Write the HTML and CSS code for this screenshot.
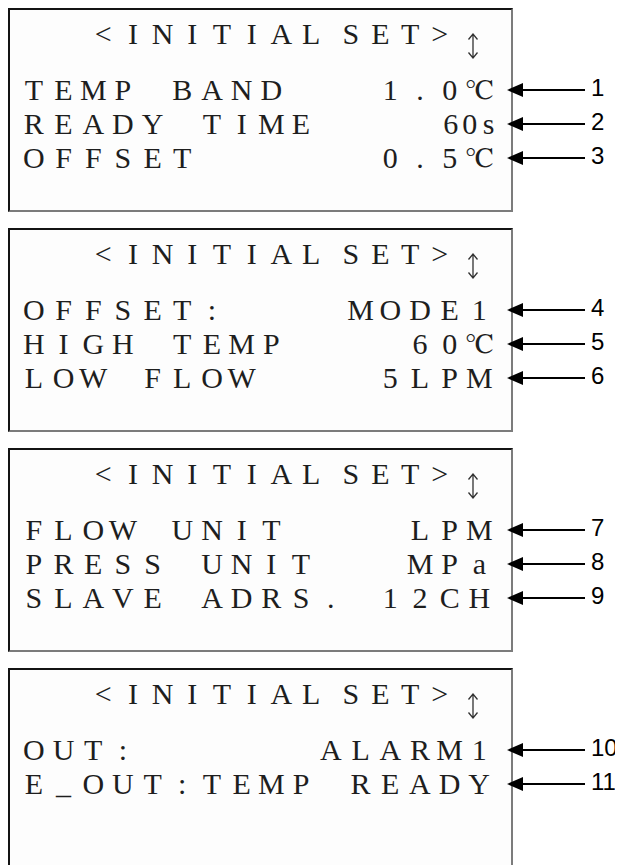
FILE: index.html
```html
<!doctype html>
<html>

<head>
	<meta charset="utf-8">
	<link rel="stylesheet" href="styles.css">
	<title>INITIAL SET</title>
</head>

<body>
	<!-- screen 1 -->
	<div class="lcd">
		<div class="row title"><span class="lead"></span><span class="c">&lt;</span><span class="c">I</span><span class="c">N</span><span class="c">I</span><span class="c">T</span><span class="c">I</span><span class="c">A</span><span class="c">L</span><span class="gap"></span><span class="c">S</span><span class="c">E</span><span class="c">T</span><span class="c">&gt;</span><svg class="updown" width="12" height="26" viewBox="0 0 12 26"><path d="M6 1V25M1.5 6.5L6 1L10.5 6.5M1.5 19.5L6 25L10.5 19.5" /></svg></div>
		<div class="row"><span class="c">T</span><span class="c">E</span><span class="c">M</span><span class="c">P</span><span class="c"></span><span class="c">B</span><span class="c">A</span><span class="c">N</span><span class="c">D</span><span class="fill"></span><span class="c">1</span><span class="c">.</span><span class="c">0</span><span class="c deg">℃</span>
			<span class="callout"><svg class="arrow" width="80" height="16" viewBox="0 0 80 16"><path d="M0 8L16 1L16 15Z" /><rect x="15" y="7" width="63" height="2" /></svg><span class="num">1</span></span></div>
		<div class="row"><span class="c">R</span><span class="c">E</span><span class="c">A</span><span class="c">D</span><span class="c">Y</span><span class="c"></span><span class="c">T</span><span class="c">I</span><span class="c">M</span><span class="c">E</span><span class="fill"></span><span class="n">6</span><span class="n">0</span><span class="n last">s</span>
			<span class="callout"><svg class="arrow" width="80" height="16" viewBox="0 0 80 16"><path d="M0 8L16 1L16 15Z" /><rect x="15" y="7" width="63" height="2" /></svg><span class="num">2</span></span></div>
		<div class="row"><span class="c">O</span><span class="c">F</span><span class="c">F</span><span class="c">S</span><span class="c">E</span><span class="c">T</span><span class="fill"></span><span class="c">0</span><span class="c">.</span><span class="c">5</span><span class="c deg">℃</span>
			<span class="callout"><svg class="arrow" width="80" height="16" viewBox="0 0 80 16"><path d="M0 8L16 1L16 15Z" /><rect x="15" y="7" width="63" height="2" /></svg><span class="num">3</span></span></div>
	</div>

	<!-- screen 2 -->
	<div class="lcd">
		<div class="row title"><span class="lead"></span><span class="c">&lt;</span><span class="c">I</span><span class="c">N</span><span class="c">I</span><span class="c">T</span><span class="c">I</span><span class="c">A</span><span class="c">L</span><span class="gap"></span><span class="c">S</span><span class="c">E</span><span class="c">T</span><span class="c">&gt;</span><svg class="updown" width="12" height="26" viewBox="0 0 12 26"><path d="M6 1V25M1.5 6.5L6 1L10.5 6.5M1.5 19.5L6 25L10.5 19.5" /></svg></div>
		<div class="row"><span class="c">O</span><span class="c">F</span><span class="c">F</span><span class="c">S</span><span class="c">E</span><span class="c">T</span><span class="c">:</span><span class="fill"></span><span class="c">M</span><span class="c">O</span><span class="c">D</span><span class="c">E</span><span class="c">1</span>
			<span class="callout"><svg class="arrow" width="80" height="16" viewBox="0 0 80 16"><path d="M0 8L16 1L16 15Z" /><rect x="15" y="7" width="63" height="2" /></svg><span class="num">4</span></span></div>
		<div class="row"><span class="c">H</span><span class="c">I</span><span class="c">G</span><span class="c">H</span><span class="c"></span><span class="c">T</span><span class="c">E</span><span class="c">M</span><span class="c">P</span><span class="fill"></span><span class="c">6</span><span class="c">0</span><span class="c deg">℃</span>
			<span class="callout"><svg class="arrow" width="80" height="16" viewBox="0 0 80 16"><path d="M0 8L16 1L16 15Z" /><rect x="15" y="7" width="63" height="2" /></svg><span class="num">5</span></span></div>
		<div class="row"><span class="c">L</span><span class="c">O</span><span class="c">W</span><span class="c"></span><span class="c">F</span><span class="c">L</span><span class="c">O</span><span class="c">W</span><span class="fill"></span><span class="c">5</span><span class="c">L</span><span class="c">P</span><span class="c">M</span>
			<span class="callout"><svg class="arrow" width="80" height="16" viewBox="0 0 80 16"><path d="M0 8L16 1L16 15Z" /><rect x="15" y="7" width="63" height="2" /></svg><span class="num">6</span></span></div>
	</div>

	<!-- screen 3 -->
	<div class="lcd">
		<div class="row title"><span class="lead"></span><span class="c">&lt;</span><span class="c">I</span><span class="c">N</span><span class="c">I</span><span class="c">T</span><span class="c">I</span><span class="c">A</span><span class="c">L</span><span class="gap"></span><span class="c">S</span><span class="c">E</span><span class="c">T</span><span class="c">&gt;</span><svg class="updown" width="12" height="26" viewBox="0 0 12 26"><path d="M6 1V25M1.5 6.5L6 1L10.5 6.5M1.5 19.5L6 25L10.5 19.5" /></svg></div>
		<div class="row"><span class="c">F</span><span class="c">L</span><span class="c">O</span><span class="c">W</span><span class="c"></span><span class="c">U</span><span class="c">N</span><span class="c">I</span><span class="c">T</span><span class="fill"></span><span class="c">L</span><span class="c">P</span><span class="c">M</span>
			<span class="callout"><svg class="arrow" width="80" height="16" viewBox="0 0 80 16"><path d="M0 8L16 1L16 15Z" /><rect x="15" y="7" width="63" height="2" /></svg><span class="num">7</span></span></div>
		<div class="row"><span class="c">P</span><span class="c">R</span><span class="c">E</span><span class="c">S</span><span class="c">S</span><span class="c"></span><span class="c">U</span><span class="c">N</span><span class="c">I</span><span class="c">T</span><span class="fill"></span><span class="c">M</span><span class="c">P</span><span class="c">a</span>
			<span class="callout"><svg class="arrow" width="80" height="16" viewBox="0 0 80 16"><path d="M0 8L16 1L16 15Z" /><rect x="15" y="7" width="63" height="2" /></svg><span class="num">8</span></span></div>
		<div class="row"><span class="c">S</span><span class="c">L</span><span class="c">A</span><span class="c">V</span><span class="c">E</span><span class="c"></span><span class="c">A</span><span class="c">D</span><span class="c">R</span><span class="c">S</span><span class="c">.</span><span class="fill"></span><span class="c">1</span><span class="c">2</span><span class="c">C</span><span class="c">H</span>
			<span class="callout"><svg class="arrow" width="80" height="16" viewBox="0 0 80 16"><path d="M0 8L16 1L16 15Z" /><rect x="15" y="7" width="63" height="2" /></svg><span class="num">9</span></span></div>
	</div>

	<!-- screen 4, runs off the bottom of the page -->
	<div class="lcd cut">
		<div class="row title"><span class="lead"></span><span class="c">&lt;</span><span class="c">I</span><span class="c">N</span><span class="c">I</span><span class="c">T</span><span class="c">I</span><span class="c">A</span><span class="c">L</span><span class="gap"></span><span class="c">S</span><span class="c">E</span><span class="c">T</span><span class="c">&gt;</span><svg class="updown" width="12" height="26" viewBox="0 0 12 26"><path d="M6 1V25M1.5 6.5L6 1L10.5 6.5M1.5 19.5L6 25L10.5 19.5" /></svg></div>
		<div class="row"><span class="c">O</span><span class="c">U</span><span class="c">T</span><span class="c">:</span><span class="fill"></span><span class="c">A</span><span class="c">L</span><span class="c">A</span><span class="c">R</span><span class="c">M</span><span class="c">1</span>
			<span class="callout"><svg class="arrow" width="80" height="16" viewBox="0 0 80 16"><path d="M0 8L16 1L16 15Z" /><rect x="15" y="7" width="63" height="2" /></svg><span class="num">10</span></span></div>
		<div class="row"><span class="c">E</span><span class="c">_</span><span class="c">O</span><span class="c">U</span><span class="c">T</span><span class="c">:</span><span class="c">T</span><span class="c">E</span><span class="c">M</span><span class="c">P</span><span class="c"></span><span class="c">R</span><span class="c">E</span><span class="c">A</span><span class="c">D</span><span class="c">Y</span>
			<span class="callout"><svg class="arrow" width="80" height="16" viewBox="0 0 80 16"><path d="M0 8L16 1L16 15Z" /><rect x="15" y="7" width="63" height="2" /></svg><span class="num">11</span></span></div>
	</div>
</body>

</html>
```

FILE: styles.css
```css
html {
	overflow: hidden;
}

body {
	margin: 8px 8px 0;
	background: #fff;
}

/* one LCD screen */
.lcd {
	box-sizing: border-box;
	width: 505px;
	height: 204px;
	margin-bottom: 16px;
	padding: 7px 0 0 9px;
	border: 2px solid;
	border-color: #141414 #7c7c7c #7c7c7c #141414;
	background: #fdfdfd;
	font-family: "Liberation Serif", "Times New Roman", Tinos, "Nimbus Roman", FreeSerif, "Noto Serif", "DejaVu Serif", serif;
	font-size: 30px;
	color: #1e1e1e;
}

.lcd.cut {
	height: 197px;
	margin-bottom: 0;
	border-bottom: none;
}

/* 16 character cells per line */
.row {
	position: relative;
	display: flex;
	width: 475.2px;
	height: 34px;
	line-height: 34px;
	white-space: pre;
}

.title {
	margin-bottom: 22px;
}

.c {
	flex: none;
	width: 29.7px;
	text-align: center;
}

.n {
	flex: none;
	width: 19px;
	text-align: center;
}

.n.last {
	margin-right: -4px;
}

.deg {
	font-size: 28px;
}

.fill {
	flex: 1;
}

.lead {
	flex: none;
	width: 69.4px;
}

.gap {
	flex: none;
	width: 10px;
}

.updown {
	flex: none;
	margin: 16px 0 0 12px;
}

.updown path {
	fill: none;
	stroke: #333;
	stroke-width: 1.3;
}

/* numbered pointers on the right */
.callout {
	position: absolute;
	top: 0;
	left: 488px;
	height: 34px;
	display: flex;
	align-items: center;
}

.arrow {
	flex: none;
	fill: #000;
}

.num {
	flex: none;
	margin: 0 0 5px 4px;
	font-family: "Liberation Sans", Arial, sans-serif;
	font-size: 24px;
	line-height: 24px;
	color: #000;
}
```
